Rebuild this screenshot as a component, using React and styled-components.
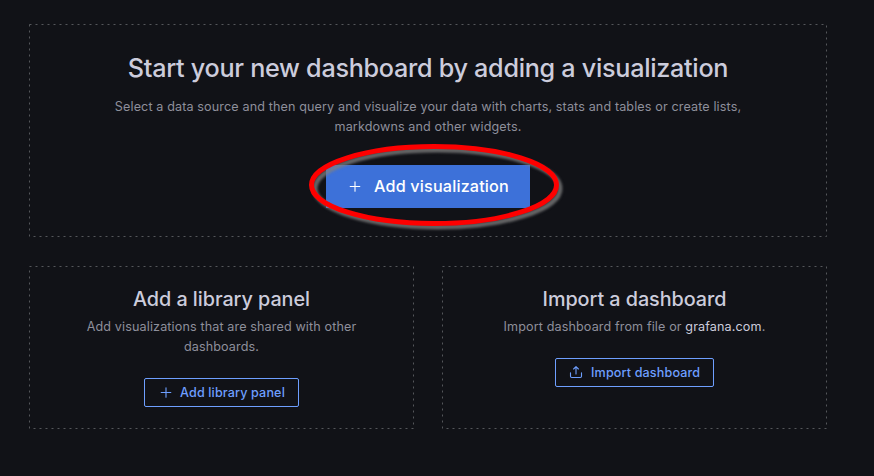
import React from "react";
import styled, { createGlobalStyle } from "styled-components";

const GlobalStyle = createGlobalStyle`
  *, *::before, *::after { box-sizing: border-box; }
  body { margin: 0; background: #111217; font-family: Inter, sans-serif; }
`;

const Page = styled.main`
  width: 874px;
  height: 476px;
  padding: 24px 47px 0 29px;
  background: #111217;
  color: #ccccdc;
  display: flex;
  flex-direction: column;
  gap: 29px;
  overflow: hidden;
`;

const Row = styled.div`
  display: grid;
  grid-template-columns: 1fr 1fr;
  gap: 28px;
`;

const Panel = styled.section`
  position: relative;
  height: ${(p) => p.$height}px;
  padding-top: ${(p) => p.$top}px;
  display: flex;
  flex-direction: column;
  align-items: center;
`;

const Outline = styled.svg`
  position: absolute;
  inset: 0;
  width: 100%;
  height: 100%;
  pointer-events: none;
`;

const Title = styled.h1`
  margin: 0;
  font-size: 25.2px;
  line-height: 30px;
  font-weight: 450;
  letter-spacing: -0.29px;
  white-space: nowrap;
`;

const Subtitle = styled.h2`
  margin: 0;
  font-size: 19.8px;
  line-height: 24px;
  font-weight: 500;
  letter-spacing: -0.05px;
  white-space: nowrap;
`;

const Text = styled.p`
  margin: ${(p) => p.$gap}px 0 0;
  font-size: 12.6px;
  line-height: 20px;
  letter-spacing: 0.12px;
  text-align: center;
  color: #8e8f9b;
  white-space: nowrap;
`;

const Link = styled.a`
  color: #ccccdc;
`;

const PrimaryButton = styled.button`
  position: relative;
  width: 204px;
  height: 43px;
  margin-top: 28px;
  padding: 0 0 0 21px;
  border: 0;
  background: #3d71d9;
  color: #fff;
  display: flex;
  align-items: center;
  gap: 11px;
  font: 500 16.2px/24px Inter, sans-serif;
  letter-spacing: 0.16px;
  white-space: nowrap;
`;

const PrimaryLabel = styled.span`
  padding-bottom: 1px;
`;

const OutlineButton = styled.button`
  width: ${(p) => p.$width}px;
  height: 29px;
  margin-top: ${(p) => p.$gap}px;
  padding: 0 0 0 13px;
  border: 1px solid #6e9fff;
  border-radius: 2px;
  background: transparent;
  color: #6e9fff;
  display: flex;
  align-items: center;
  gap: 6px;
  font: 500 12.6px/20px Inter, sans-serif;
  letter-spacing: 0.13px;
  white-space: nowrap;
`;

const Ring = styled.svg`
  position: absolute;
  left: -24px;
  top: -30px;
  overflow: visible;
  pointer-events: none;
`;

const PlusIcon = () => (
  <svg width="16" height="16" viewBox="0 0 16 16" fill="none" stroke="currentColor" strokeWidth="1.1" strokeLinecap="round">
    <path d="M8 2.7v9.6M3.2 7.5h9.6" />
  </svg>
);

const UploadIcon = () => (
  <svg width="16" height="16" viewBox="0 0 16 16" fill="none" stroke="currentColor" strokeWidth="1.1" strokeLinecap="round" strokeLinejoin="round">
    <path d="M7 9V1.6M4.6 4 7 1.6 9.4 4M1.5 7.7v3.6q0 1.2 1.2 1.2h8.6q1.2 0 1.2-1.2V7.7" />
  </svg>
);

const DashedOutline = () => (
  <Outline>
    <rect x="0.5" y="0.5" width="calc(100% - 1px)" height="calc(100% - 1px)" fill="none" stroke="#55565b" strokeDasharray="2 4" />
  </Outline>
);

export default function App() {
  return (
    <>
      <GlobalStyle />
      <Page>
        <Panel $height={213} $top={29}>
          <DashedOutline />
          <Title>Start your new dashboard by adding a visualization</Title>
          <Text $gap={14}>
            Select a data source and then query and visualize your data with charts, stats and tables or create lists,
            <br />
            markdowns and other widgets.
          </Text>
          <PrimaryButton>
            <PlusIcon />
            <PrimaryLabel>Add visualization</PrimaryLabel>
            <Ring width="256" height="90">
              <defs>
                <filter id="ringShadow" x="-10%" y="-20%" width="120%" height="150%" colorInterpolationFilters="sRGB">
                  <feDropShadow dx="3.5" dy="3.5" stdDeviation="1.2" floodColor="#808080" floodOpacity="0.75" />
                </filter>
              </defs>
              <ellipse cx="132" cy="50" rx="122.5" ry="38.5" fill="none" stroke="#fe0000" strokeWidth="5" filter="url(#ringShadow)" />
            </Ring>
          </PrimaryButton>
        </Panel>
        <Row>
          <Panel $height={163} $top={21}>
            <DashedOutline />
            <Subtitle>Add a library panel</Subtitle>
            <Text $gap={6}>
              Add visualizations that are shared with other
              <br />
              dashboards.
            </Text>
            <OutlineButton $width={155} $gap={21}>
              <PlusIcon />
              <span>Add library panel</span>
            </OutlineButton>
          </Panel>
          <Panel $height={163} $top={21}>
            <DashedOutline />
            <Subtitle>Import a dashboard</Subtitle>
            <Text $gap={6}>
              Import dashboard from file or <Link>grafana.com</Link>.
            </Text>
            <OutlineButton $width={159} $gap={21}>
              <UploadIcon />
              <span>Import dashboard</span>
            </OutlineButton>
          </Panel>
        </Row>
      </Page>
    </>
  );
}
